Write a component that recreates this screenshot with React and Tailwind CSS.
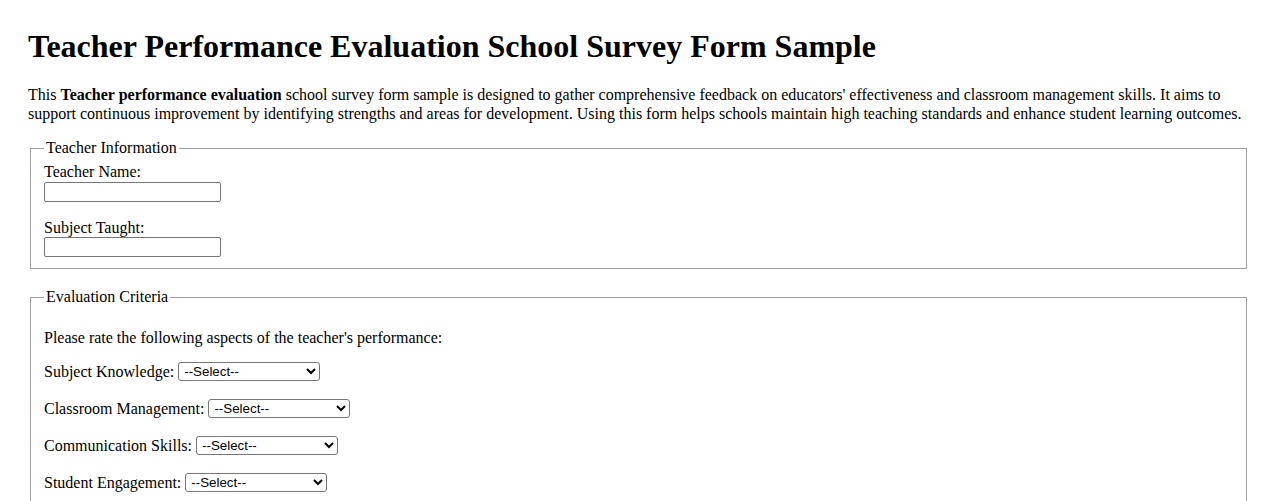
const criteria = [
  'Subject Knowledge',
  'Classroom Management',
  'Communication Skills',
  'Student Engagement',
]

function Field({ label, last }) {
  return (
    <div className={last ? '' : 'mb-[17px]'}>
      <label className="block h-[18.4px] leading-[18.4px]">{label}:</label>
      <input
        type="text"
        className="block w-[177px] h-[20px] border border-[#767676] rounded-[2px] bg-white px-[2px] text-[13.33px] font-['Liberation_Sans',sans-serif]"
      />
    </div>
  )
}

function Rating({ label }) {
  return (
    <div className="flex items-center h-[20px] mb-[17px]">
      <span className="leading-[18.4px]">{label}:</span>
      <select className="ml-[4px] w-[142px] h-[19px] border border-[#767676] rounded-[3px] bg-white pl-[1px] text-[13.33px] font-['Liberation_Sans',sans-serif] text-black">
        <option>--Select--</option>
        <option>Excellent</option>
        <option>Good</option>
        <option>Average</option>
        <option>Poor</option>
      </select>
    </div>
  )
}

export default function App() {
  return (
    <div className="min-h-screen bg-white text-black font-['Liberation_Serif',serif] text-[16px] leading-[18.4px] px-[28px] pt-[28px] pb-10">
      <h1 className="text-[32px] font-bold leading-[37px] mb-[21.4px]">
        Teacher Performance Evaluation School Survey Form Sample
      </h1>
      <p className="mb-[16px]">
        This <strong>Teacher performance evaluation</strong> school survey form sample is designed to gather
        comprehensive feedback on educators' effectiveness and classroom management skills. It aims to support
        continuous improvement by identifying strengths and areas for development. Using this form helps schools
        maintain high teaching standards and enhance student learning outcomes.
      </p>

      <form>
        <fieldset className="ml-[2px] mr-[3px] mb-[1px] border border-[#a0a0a0] pl-[13px] pr-3 pt-[5.6px] pb-[11px]">
          <legend className="px-[2px] leading-[18.4px]">Teacher Information</legend>
          <Field label="Teacher Name" />
          <Field label="Subject Taught" last />
        </fieldset>

        <div className="h-[18.4px]" />

        <fieldset className="ml-[2px] mr-[3px] mb-[1px] border border-[#a0a0a0] pl-[13px] pr-3 pt-[6.6px] pb-[11px]">
          <legend className="px-[2px] leading-[18.4px]">Evaluation Criteria</legend>
          <p className="mt-[16px] mb-[14px]">Please rate the following aspects of the teacher's performance:</p>
          {criteria.map((c) => (
            <Rating key={c} label={c} />
          ))}
        </fieldset>
      </form>
    </div>
  )
}
